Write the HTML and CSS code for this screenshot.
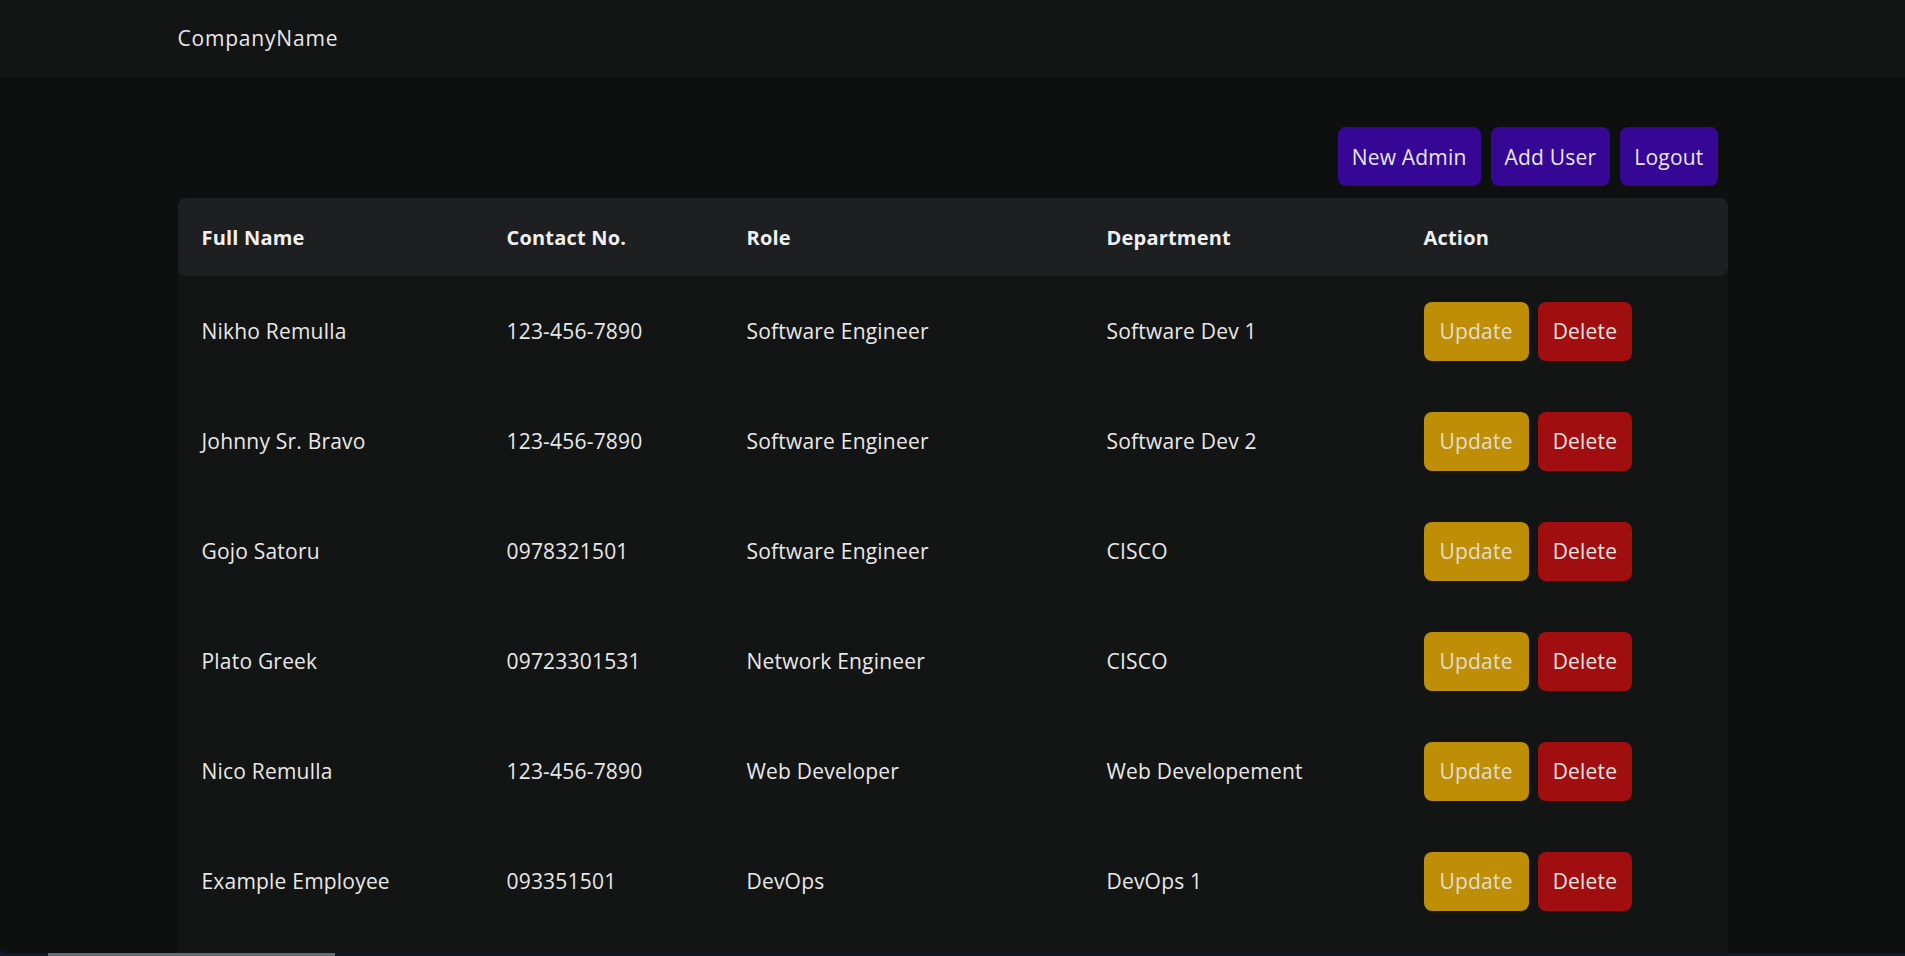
FILE: index.html
```html
<!DOCTYPE html>
<html lang="en">
<head>
<meta charset="utf-8">
<title>Employees</title>
<link rel="stylesheet" href="styles.css">
</head>
<body>
<div class="screen">
  <header class="navbar">
    <div class="container">
      <span class="brand">CompanyName</span>
    </div>
  </header>
  <main class="container main">
    <div class="toolbar">
      <button class="btn btn-purple">New Admin</button>
      <button class="btn btn-purple">Add User</button>
      <button class="btn btn-purple">Logout</button>
    </div>
    <div class="table">
      <div class="row head">
        <div class="cell">Full Name</div>
        <div class="cell">Contact No.</div>
        <div class="cell">Role</div>
        <div class="cell">Department</div>
        <div class="cell">Action</div>
      </div>
      <div class="row">
        <div class="cell">Nikho Remulla</div>
        <div class="cell">123-456-7890</div>
        <div class="cell">Software Engineer</div>
        <div class="cell">Software Dev 1</div>
        <div class="cell actions"><button class="btn btn-update">Update</button><button class="btn btn-delete">Delete</button></div>
      </div>
      <div class="row">
        <div class="cell">Johnny Sr. Bravo</div>
        <div class="cell">123-456-7890</div>
        <div class="cell">Software Engineer</div>
        <div class="cell">Software Dev 2</div>
        <div class="cell actions"><button class="btn btn-update">Update</button><button class="btn btn-delete">Delete</button></div>
      </div>
      <div class="row">
        <div class="cell">Gojo Satoru</div>
        <div class="cell">0978321501</div>
        <div class="cell">Software Engineer</div>
        <div class="cell">CISCO</div>
        <div class="cell actions"><button class="btn btn-update">Update</button><button class="btn btn-delete">Delete</button></div>
      </div>
      <div class="row">
        <div class="cell">Plato Greek</div>
        <div class="cell">09723301531</div>
        <div class="cell">Network Engineer</div>
        <div class="cell">CISCO</div>
        <div class="cell actions"><button class="btn btn-update">Update</button><button class="btn btn-delete">Delete</button></div>
      </div>
      <div class="row">
        <div class="cell">Nico Remulla</div>
        <div class="cell">123-456-7890</div>
        <div class="cell">Web Developer</div>
        <div class="cell">Web Developement</div>
        <div class="cell actions"><button class="btn btn-update">Update</button><button class="btn btn-delete">Delete</button></div>
      </div>
      <div class="row">
        <div class="cell">Example Employee</div>
        <div class="cell">093351501</div>
        <div class="cell">DevOps</div>
        <div class="cell">DevOps 1</div>
        <div class="cell actions"><button class="btn btn-update">Update</button><button class="btn btn-delete">Delete</button></div>
      </div>
    </div>
  </main>
</div>
<div class="hscroll"><div class="hthumb"></div></div>
</body>
</html>
```
FILE: styles.css
```css
html, body {
  margin: 0;
  padding: 0;
  height: 100%;
  overflow: hidden;
  background: #0a1a30;
}

body {
  font-family: "Open Sans", "Liberation Sans", sans-serif;
  color: #e8e8e8;
}

.screen {
  height: calc(100vh - 3px);
  background: #0e0f0f;
  border-bottom-left-radius: 6px;
  overflow: hidden;
  display: flex;
  flex-direction: column;
}

.container {
  width: 1550px;
  margin: 0 auto;
}

.navbar {
  height: 77px;
  background: #131414;
  display: flex;
  align-items: center;
  flex-shrink: 0;
}

.brand {
  font-size: 21px;
  letter-spacing: 0.8px;
  position: relative;
  top: -1px;
}

.main {
  flex: 1;
  display: flex;
  flex-direction: column;
  padding-top: 50px;
  min-height: 0;
}

.toolbar {
  display: flex;
  justify-content: flex-end;
  gap: 10px;
  padding-right: 10px;
  margin-bottom: 12px;
}

.btn {
  font-family: inherit;
  font-size: 21px;
  letter-spacing: 0.2px;
  color: #e6e6e6;
  border: none;
  border-radius: 8px;
  height: 59px;
  padding: 0 16px;
  cursor: pointer;
}

.btn-purple { background: #360794; padding: 0 14px; }
.btn-update { background: #bd8e06; color: #e4dccb; }
.btn-delete { background: #a10e10; padding: 0 15px; }

.table {
  flex: 1;
  background: #131414;
  border-radius: 8px 8px 0 0;
}

.row {
  display: grid;
  grid-template-columns: 305px 240px 360px 317px 1fr;
  height: 110px;
  align-items: center;
  font-size: 21px;
  letter-spacing: 0.2px;
}

.row.head {
  height: 78px;
  background: #1e1f21;
  border-radius: 8px;
  font-size: 20px;
  font-weight: 700;
  letter-spacing: 0.2px;
  color: #f0f0f0;
}

.cell {
  padding-left: 24px;
}

.actions {
  display: flex;
  gap: 9px;
}

.hscroll {
  position: fixed;
  left: 0;
  right: 0;
  bottom: 0;
  height: 3px;
}

.hthumb {
  position: absolute;
  left: 48px;
  width: 287px;
  top: 0;
  bottom: 0;
  background: #5a6e80;
}
```
